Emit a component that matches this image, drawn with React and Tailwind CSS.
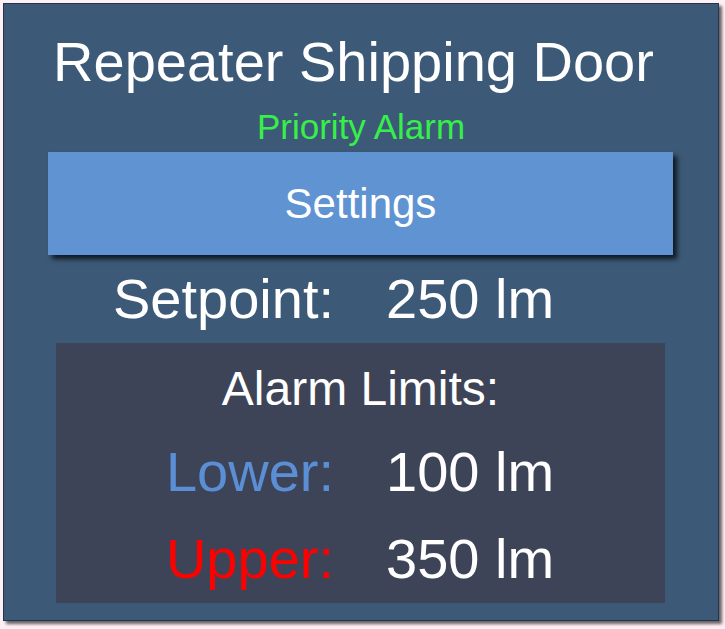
const font = "font-['Liberation_Sans',Arial,sans-serif]";

function Row({ label, labelCls, value, labelW }) {
  return (
    <div className="flex items-baseline text-[56px] leading-none">
      <div className={`text-right ${labelW} ${labelCls}`}>{label}</div>
      <div className="pl-[52px] text-white">{value}</div>
    </div>
  );
}

export default function App() {
  return (
    <div className={`w-[725px] h-[629px] bg-[#fff0f5] pt-[3px] pl-[3px] ${font}`}>
      <div className="w-[716px] h-[618px] bg-[#3c5a78] border border-[#22364e] shadow-[3px_3px_3px_rgba(0,0,0,0.6)] flex flex-col">
        <div className="text-white text-[56px] leading-none text-center mt-[30px] pr-[15px]">
          Repeater Shipping Door
        </div>
        <div className="text-[#37ef48] text-[35px] leading-none text-center mt-[19px]">
          Priority Alarm
        </div>
        <div className="ml-[44px] mt-[8px] w-[625px] h-[103px] bg-[#5f93d2] shadow-[4px_4px_5px_rgba(0,0,0,0.75)] flex items-center justify-center text-white text-[42px] leading-none">
          Settings
        </div>
        <div className="mt-[16px]">
          <Row label="Setpoint:" labelCls="text-white" labelW="w-[330px]" value="250 lm" />
        </div>
        <div className="ml-[52px] mt-[16px] w-[609px] h-[260px] bg-[#3e4457] flex flex-col">
          <div className="text-white text-[48px] leading-none text-center pt-[22px]">
            Alarm Limits:
          </div>
          <div className="mt-[31px]">
            <Row label="Lower:" labelCls="text-[#5b8fd5]" labelW="w-[278px]" value="100 lm" />
          </div>
          <div className="mt-[31px]">
            <Row label="Upper:" labelCls="text-[#ff0000]" labelW="w-[278px]" value="350 lm" />
          </div>
        </div>
      </div>
    </div>
  );
}
